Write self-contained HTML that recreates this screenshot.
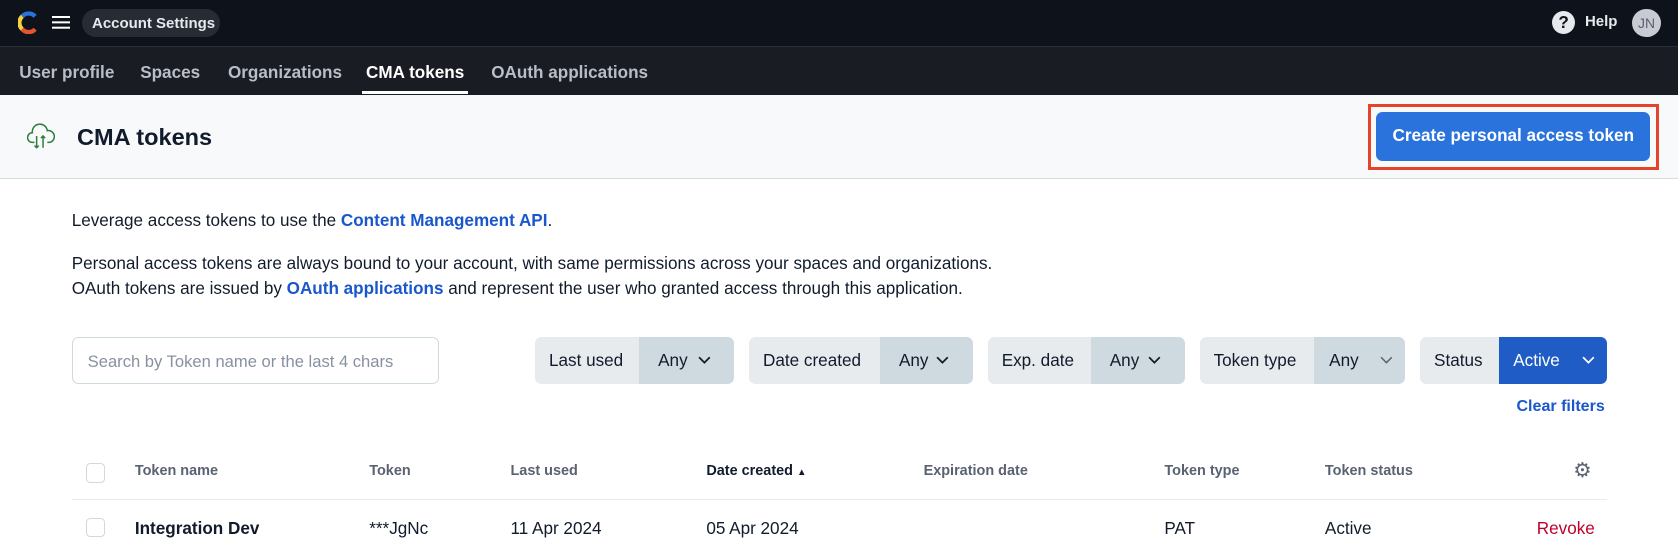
<!DOCTYPE html>
<html><head><meta charset="utf-8"><style>
*{box-sizing:border-box;margin:0;padding:0}
body{width:1678px;height:544px;overflow:hidden;background:#fff;font-family:"Liberation Sans",Arial,sans-serif;color:#111b2b;position:relative}
#w{position:absolute;left:0;top:0;width:1568px;height:509px;zoom:1.0702}
.abs{position:absolute}
.top{left:0;top:0;width:1568px;height:43px;background:#0e131b}
.nav{left:0;top:43px;width:1568px;height:46px;background:#1a1c23;border-top:1px solid #2a2d35}
.nav span{position:absolute;top:15px;font-size:16px;font-weight:bold;color:#b8bec8}
.hdr{left:0;top:89px;width:1568px;height:78px;background:#f7f9fa;border-bottom:1px solid #d3dce0}
.p{font-size:16px;color:#111b2b;left:67px}
a{color:#1a57cc;font-weight:bold;text-decoration:none}
.f{position:absolute;top:315px;height:44px;border-radius:6px;overflow:hidden;display:flex;font-size:16px}
.f .l{background:#e7ebee;display:flex;align-items:center;padding-left:13px}
.f .v{background:#cfd9e0;display:flex;align-items:center;padding-left:18px;position:relative;flex:1}
.chev{position:absolute;right:22px;top:15px}
.th{top:433px;font-size:13.5px;font-weight:bold;color:#5a6272}
.td{top:485px;font-size:16px;color:#111b2b}
.cb{width:18px;height:18px;border:1.5px solid #cfd9e0;border-radius:4px;left:80px;background:#fff}
</style></head><body><div id="w">
<div class="abs top">
<svg class="abs" style="left:17px;top:10px" width="20" height="22" viewBox="0 0 20 22"><path d="M16 5A8 8 0 0 0 4 5" stroke="#2a73dc" stroke-width="4" fill="none"/><path d="M4 5A8 8 0 0 0 4 17" stroke="#f5d13b" stroke-width="4" fill="none"/><path d="M4 17A8 8 0 0 0 16 17" stroke="#e5532f" stroke-width="4" fill="none"/></svg>
<div class="abs" style="left:49px;top:15px;width:16px;height:2px;background:#fff;box-shadow:0 5px 0 #fff,0 10px 0 #fff"></div>
<div class="abs" style="left:77px;top:8px;width:129px;height:27px;border-radius:14px;background:#272b33;color:#e6e9ee;font-size:14px;font-weight:bold;padding:6px 0 0 9px">Account Settings</div>
<div class="abs" style="left:1450px;top:10px;width:22px;height:22px;border-radius:50%;background:#e6e9ee;color:#0e131b;font-weight:bold;font-size:16px;text-align:center;line-height:22px">?</div>
<div class="abs" style="left:1481px;top:12px;color:#e6e9ee;font-size:14px;font-weight:bold">Help</div>
<div class="abs" style="left:1525px;top:8px;width:27px;height:27px;border-radius:50%;background:#c8ccd2;color:#5a6070;font-size:13px;text-align:center;line-height:27px">JN</div>
</div>
<div class="abs nav">
<span style="left:18px">User profile</span><span style="left:131px">Spaces</span><span style="left:213px">Organizations</span><span style="left:342px;color:#fff">CMA tokens</span><span style="left:459px">OAuth applications</span>
<div class="abs" style="left:338px;top:41px;width:99px;height:3px;background:#fff"></div>
</div>
<div class="abs hdr">
<svg class="abs" style="left:25px;top:24px" width="26" height="28" viewBox="0 0 26 28" fill="none" stroke="#2e7d3a" stroke-width="1.4"><path d="M7 20H5A4.5 4.5 0 0 1 5 11 7 7 0 0 1 19 9a5 5 0 0 1 2 11h-2"/><path d="M9 14v11M7 23l2 2 2-2M15 25V14M13 16l2-2 2 2"/></svg>
<div class="abs" style="left:72px;top:27px;font-size:22px;font-weight:bold">CMA tokens</div>
<div class="abs" style="left:1278px;top:8px;width:272px;height:62px;border:3px solid #e5432a"></div>
<div class="abs" style="left:1286px;top:16px;width:256px;height:45px;border-radius:6px;background:#2a73dc;color:#fff;font-size:16px;font-weight:bold;text-align:center;line-height:45px">Create personal access token</div>
</div>
<div class="abs p" style="top:197px">Leverage access tokens to use the <a>Content Management API</a>.</div>
<div class="abs p" style="top:237px">Personal access tokens are always bound to your account, with same permissions across your spaces and organizations.</div>
<div class="abs p" style="top:261px">OAuth tokens are issued by <a>OAuth applications</a> and represent the user who granted access through this application.</div>
<div class="abs" style="left:67px;top:315px;width:343px;height:44px;border:1px solid #cfd9e0;border-radius:6px;color:#8891a0;font-size:15.5px;padding:13px 0 0 14px">Search by Token name or the last 4 chars</div>
<div class="f" style="left:500px;width:186px"><div class="l" style="width:97px">Last used</div><div class="v">Any<svg class="chev" width="12" height="12"><path d="M1 4l5 5 5-5" stroke="#111b2b" stroke-width="1.6" fill="none"/></svg></div></div>
<div class="f" style="left:700px;width:209px"><div class="l" style="width:122px">Date created</div><div class="v">Any<svg class="chev" width="12" height="12"><path d="M1 4l5 5 5-5" stroke="#111b2b" stroke-width="1.6" fill="none"/></svg></div></div>
<div class="f" style="left:923px;width:184px"><div class="l" style="width:96px">Exp. date</div><div class="v">Any<svg class="chev" width="12" height="12"><path d="M1 4l5 5 5-5" stroke="#111b2b" stroke-width="1.6" fill="none"/></svg></div></div>
<div class="f" style="left:1121px;width:192px"><div class="l" style="width:107px">Token type</div><div class="v" style="padding-left:14px">Any<svg class="chev" style="right:12px" width="12" height="12"><path d="M1 4l5 5 5-5" stroke="#5a6272" stroke-width="1.4" fill="none"/></svg></div></div>
<div class="f" style="left:1327px;width:175px"><div class="l" style="width:74px">Status</div><div class="v" style="background:#1f5cc6;color:#fff;padding-left:13px">Active<svg class="chev" style="right:12px" width="12" height="12"><path d="M1 4l5 5 5-5" stroke="#fff" stroke-width="1.6" fill="none"/></svg></div></div>
<div class="abs" style="left:1417px;top:371px;font-size:15px"><a>Clear filters</a></div>
<div class="abs cb" style="top:433px"></div>
<div class="abs th" style="left:126px">Token name</div>
<div class="abs th" style="left:345px">Token</div>
<div class="abs th" style="left:477px">Last used</div>
<div class="abs th" style="left:660px;color:#111b2b">Date created <span style="font-size:9px;color:#111b2b">▲</span></div>
<div class="abs th" style="left:863px">Expiration date</div>
<div class="abs th" style="left:1088px">Token type</div>
<div class="abs th" style="left:1238px">Token status</div>
<div class="abs" style="left:1470px;top:428px;font-size:19px;color:#5a6272">⚙</div>
<div class="abs" style="left:67px;top:466px;width:1435px;height:1px;background:#e7ebee"></div>
<div class="abs cb" style="top:484px"></div>
<div class="abs td" style="left:126px;font-weight:bold">Integration Dev</div>
<div class="abs td" style="left:345px">***JgNc</div>
<div class="abs td" style="left:477px">11 Apr 2024</div>
<div class="abs td" style="left:660px">05 Apr 2024</div>
<div class="abs td" style="left:1088px">PAT</div>
<div class="abs td" style="left:1238px">Active</div>
<div class="abs td" style="left:1436px;color:#bd002a">Revoke</div>
</div></body></html>
